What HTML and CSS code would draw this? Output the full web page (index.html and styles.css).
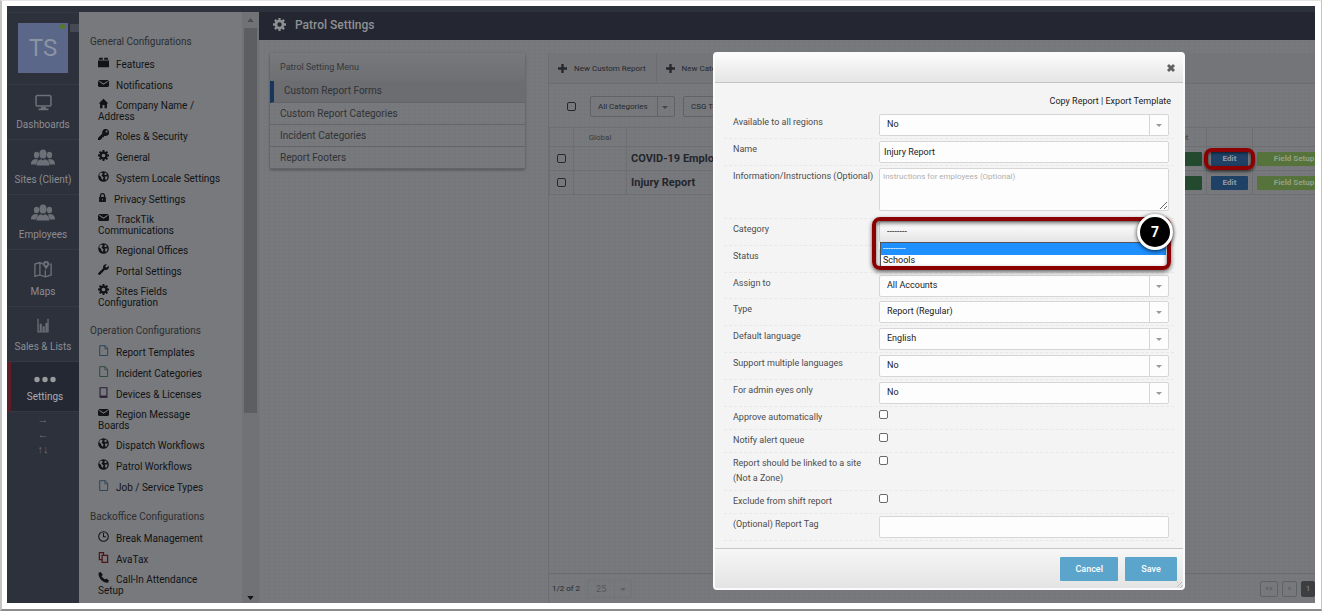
FILE: index.html
```html
<!DOCTYPE html>
<html lang="en">
<head>
<meta charset="utf-8">
<title>Patrol Settings</title>
<link rel="stylesheet" href="styles.css">
</head>
<body>
<svg class="defs" aria-hidden="true">
  <symbol id="i-box" viewBox="0 0 16 16"><path d="M2 1h5v3H1zM9 1h5l1 3H9zM0 5h16v10H0z"/></symbol>
  <symbol id="i-mail" viewBox="0 0 16 16"><path d="M2 3h12l2 2v7l-2 1H2l-2-1V5z"/><path d="M2 5l6 4 6-4" fill="none" stroke="#77797c" stroke-width="1.500"/></symbol>
  <symbol id="i-home" viewBox="0 0 16 16"><path d="M8 1l7 7h-2v7H9.500v-5h-3v5H3V8H1z"/></symbol>
  <symbol id="i-key" viewBox="0 0 16 16"><path d="M11 0a5 5 0 0 0-4.700 6.500L0 13v3h4v-2h2v-2h2l1.500-2.300A5 5 0 1 0 11 0zm1.500 2A1.500 1.500 0 1 1 11 3.500 1.500 1.500 0 0 1 12.500 2z" fill-rule="evenodd"/></symbol>
  <symbol id="i-gear" viewBox="0 0 16 16"><circle cx="8" cy="8" r="4.300" fill="none" stroke="currentColor" stroke-width="3.200"/><path d="M8 0v3M8 13v3M0 8h3M13 8h3M2.300 2.300l2.200 2.200M11.500 11.500l2.200 2.200M2.300 13.700l2.200-2.200M11.500 4.500l2.200-2.200" stroke="currentColor" stroke-width="2.800"/></symbol>
  <symbol id="i-globe" viewBox="0 0 16 16"><circle cx="8" cy="8" r="7.700"/><path d="M2 4l3-2 2 2-2 3 3 2-1 4-2-2-1-3-2-1zM10 2l3 2-1 2-3-1zM10 8h4l-1 4-2 1z" fill="#77797c"/></symbol>
  <symbol id="i-lock" viewBox="0 0 16 16"><path d="M2 7h12v9H2z"/><path d="M4.500 7V4.500a3.500 3.500 0 0 1 7 0V7" fill="none" stroke="currentColor" stroke-width="2.300"/><path d="M7.300 10h1.400v3H7.300z" fill="#77797c"/></symbol>
  <symbol id="i-wrench" viewBox="0 0 16 16"><path d="M15.500 2.500L13 5l-2-.3L10.700 3 13.200.5A4.500 4.500 0 0 0 7.500 6L.5 13a1.800 1.800 0 0 0 2.500 2.500l7-7a4.500 4.500 0 0 0 5.500-6z"/></symbol>
  <symbol id="i-file" viewBox="0 0 16 16"><path d="M2.500 1h8l3.500 4v10.300H2.500z" fill="none" stroke="currentColor" stroke-width="1.200"/><path d="M10 1v4.500h4" fill="none" stroke="currentColor"/></symbol>
  <symbol id="i-tablet" viewBox="0 0 16 16"><path d="M3 1h10v14H3z" fill="none" stroke="currentColor" stroke-width="1.600"/><path d="M3 12.500h10v2.500H3z"/></symbol>
  <symbol id="i-clock" viewBox="0 0 16 16"><circle cx="8" cy="8" r="7" fill="none" stroke="currentColor" stroke-width="1.500"/><path d="M8 3v5.500h3.500" fill="none" stroke="currentColor" stroke-width="1.500"/></symbol>
  <symbol id="i-copy" viewBox="0 0 16 16"><path d="M7 11H2V1h6v3M6 5h8v10H6z" fill="none" stroke="currentColor" stroke-width="1.800"/></symbol>
  <symbol id="i-phone" viewBox="0 0 16 16"><path d="M1 1l3-1 3 4-2 2.500 5 4.500 2-1.500 4 3-1.500 3C8 17-1 8 1 1z"/></symbol>
  <symbol id="i-monitor" viewBox="0 0 24 24"><rect x="1.500" y="2" width="21" height="15" rx="2" fill="none" stroke="currentColor" stroke-width="2.200"/><path d="M9 18h6l1 2.500h3V23H5v-2.500h3z"/></symbol>
  <symbol id="i-people" viewBox="0 0 24 16"><ellipse cx="5.500" cy="5.500" rx="2.600" ry="3.300"/><ellipse cx="18.500" cy="5.500" rx="2.600" ry="3.300"/><path d="M0 15c0-4 2-5 4.500-5.500L7 10l-2 5zM24 15c0-4-2-5-4.500-5.500L17 10l2 5z"/><ellipse cx="12" cy="4.500" rx="3.600" ry="4.500"/><path d="M5.500 16c0-4 2-5.500 4.800-6.200L12 11l1.700-1.200c2.800.7 4.800 2.200 4.800 6.200z"/></symbol>
  <symbol id="i-map" viewBox="0 0 24 22"><path d="M12 4L8 2 1.500 4v16L8 18l7 2.500 7.500-2.500V4h-2M8 2v16M15 12v8" fill="none" stroke="currentColor" stroke-width="1.700"/><path d="M16 0a4 4 0 0 1 4 4c0 3-3 4-4 8-1-4-4-5-4-8a4 4 0 0 1 4-4zm0 2.500a1.500 1.500 0 1 0 .01 0z" fill-rule="evenodd"/></symbol>
  <symbol id="i-chart" viewBox="0 0 16 18"><path d="M2 1v15.500h12V1" fill="none" stroke="currentColor" stroke-width="1.500"/><path d="M4 7h2.500v9H4zM7.500 10H10v6H7.500zM11 6h2.500v10H11z"/></symbol>
  <symbol id="i-dots" viewBox="0 0 22 6"><circle cx="3" cy="3" r="2.700"/><circle cx="11" cy="3" r="2.700"/><circle cx="19" cy="3" r="2.700"/></symbol>
  <symbol id="i-plus" viewBox="0 0 10 10"><path d="M3.700 0h2.600v3.700H10v2.600H6.300V10H3.700V6.300H0V3.700h3.700z"/></symbol>
  <symbol id="i-close" viewBox="0 0 10 10"><path d="M2.500 0L5 2.500 7.500 0 10 2.500 7.500 5 10 7.500 7.500 10 5 7.500 2.500 10 0 7.500 2.500 5 0 2.500z"/></symbol>
  <symbol id="i-up" viewBox="0 0 8 5"><path d="M0 5l4-5 4 5z"/></symbol>
  <symbol id="i-down" viewBox="0 0 8 5"><path d="M0 0h8L4 5z"/></symbol>
</svg>

<div class="app">
  <nav class="rail">
    <div class="profile"><span class="avatar">TS</span></div>
    <a class="rail-item" href="#"><svg class="rail-icon small"><use href="#i-monitor"/></svg>Dashboards</a>
    <a class="rail-item" href="#"><svg class="rail-icon"><use href="#i-people"/></svg>Sites (Client)</a>
    <a class="rail-item" href="#"><svg class="rail-icon"><use href="#i-people"/></svg>Employees</a>
    <a class="rail-item maps" href="#"><svg class="rail-icon"><use href="#i-map"/></svg>Maps</a>
    <a class="rail-item" href="#"><svg class="rail-icon chart"><use href="#i-chart"/></svg>Sales &amp; Lists</a>
    <a class="rail-item active" href="#"><svg class="rail-icon dots"><use href="#i-dots"/></svg>Settings</a>
    <div class="rail-arrows"><span>→</span><span>←</span><span>↑↓</span></div>
  </nav>

  <aside class="config">
    <div class="config-list">
      <h2 class="first">General Configurations</h2>
      <ul>
        <li><svg><use href="#i-box"/></svg>Features</li>
        <li><svg><use href="#i-mail"/></svg>Notifications</li>
        <li class="double"><svg><use href="#i-home"/></svg>Company Name /<br>Address</li>
        <li><svg><use href="#i-key"/></svg>Roles &amp; Security</li>
        <li><svg><use href="#i-gear"/></svg>General</li>
        <li><svg><use href="#i-globe"/></svg>System Locale Settings</li>
        <li><svg class="narrow"><use href="#i-lock"/></svg>Privacy Settings</li>
        <li class="double"><svg><use href="#i-mail"/></svg>TrackTik<br>Communications</li>
        <li><svg><use href="#i-globe"/></svg>Regional Offices</li>
        <li><svg><use href="#i-wrench"/></svg>Portal Settings</li>
        <li class="double"><svg><use href="#i-gear"/></svg>Sites Fields<br>Configuration</li>
      </ul>
      <h2>Operation Configurations</h2>
      <ul>
        <li><svg class="ink-blue"><use href="#i-file"/></svg>Report Templates</li>
        <li><svg class="ink-green"><use href="#i-file"/></svg>Incident Categories</li>
        <li><svg class="ink-purple"><use href="#i-tablet"/></svg>Devices &amp; Licenses</li>
        <li class="double"><svg><use href="#i-mail"/></svg>Region Message<br>Boards</li>
        <li><svg><use href="#i-globe"/></svg>Dispatch Workflows</li>
        <li><svg><use href="#i-globe"/></svg>Patrol Workflows</li>
        <li><svg class="ink-blue"><use href="#i-file"/></svg>Job / Service Types</li>
      </ul>
      <h2>Backoffice Configurations</h2>
      <ul>
        <li><svg><use href="#i-clock"/></svg>Break Management</li>
        <li><svg class="ink-red"><use href="#i-copy"/></svg>AvaTax</li>
        <li class="double"><svg><use href="#i-phone"/></svg>Call-In Attendance<br>Setup</li>
      </ul>
    </div>
    <div class="scrollbar">
      <svg class="scroll-arrow light"><use href="#i-up"/></svg>
      <div class="scroll-thumb"></div>
      <svg class="scroll-arrow"><use href="#i-down"/></svg>
    </div>
  </aside>

  <main class="main">
    <header class="titlebar"><svg><use href="#i-gear"/></svg><h1>Patrol Settings</h1></header>
    <div class="columns">
      <section class="menu">
        <h2>Patrol Setting Menu</h2>
        <a class="current" href="#">Custom Report Forms</a>
        <a href="#">Custom Report Categories</a>
        <a href="#">Incident Categories</a>
        <a href="#">Report Footers</a>
      </section>
      <section class="grid">
        <div class="toolbar">
          <button type="button"><svg><use href="#i-plus"/></svg>New Custom Report</button>
          <button type="button"><svg><use href="#i-plus"/></svg>New Category</button>
        </div>
        <div class="filters">
          <input type="checkbox" aria-label="Select all">
          <span class="filter"><select aria-label="Category filter"><option>All Categories</option></select></span>
          <span class="filter"><select aria-label="Template filter"><option>CSG Template</option></select></span>
        </div>
        <table class="reports">
          <colgroup><col class="c-check"><col class="c-global"><col><col class="c-account"><col class="c-edit"><col class="c-fields"></colgroup>
          <thead><tr><th></th><th>Global</th><th></th><th>Account</th><th></th><th></th></tr></thead>
          <tbody>
            <tr><td><input type="checkbox" aria-label="Select COVID-19 report"></td><td></td><td class="name">COVID-19 Employee Report</td><td><button class="tag green" type="button" aria-label="Account"></button></td><td><span class="marked"><button class="tag blue" type="button">Edit</button></span></td><td><button class="tag lime" type="button">Field Setup</button></td></tr>
            <tr><td><input type="checkbox" aria-label="Select Injury Report"></td><td></td><td class="name">Injury Report</td><td><button class="tag green" type="button" aria-label="Account"></button></td><td><button class="tag blue" type="button">Edit</button></td><td><button class="tag lime" type="button">Field Setup</button></td></tr>
          </tbody>
        </table>
        <footer class="pager">
          <span>1/2 of 2</span>
          <span class="size"><select aria-label="Rows per page"><option>25</option></select></span>
          <div class="pages"><button type="button">««</button><button type="button" class="slim">«</button><button type="button" class="on">1</button></div>
        </footer>
      </section>
    </div>
  </main>

  <form class="dialog" role="dialog" aria-label="Edit report">
    <header class="dialog-head"><button type="button" aria-label="Close"><svg><use href="#i-close"/></svg></button></header>
    <div class="dialog-body">
      <p class="links"><a href="#">Copy Report</a> | <a href="#">Export Template</a></p>
      <div class="row"><label for="regions">Available to all regions</label><span class="pick"><select id="regions"><option>No</option></select></span></div>
      <div class="row"><label for="name">Name</label><input type="text" id="name" value="Injury Report"></div>
      <div class="row tall"><label for="info">Information/Instructions (Optional)</label><textarea id="info" placeholder="Instructions for employees (Optional)"></textarea></div>
      <div class="row"><label for="category">Category</label>
        <span class="pick open"><select id="category"><option>--------</option></select>
          <ul class="options" role="listbox"><li class="hover" role="option">---------</li><li role="option">Schools</li></ul>
          <span class="callout"></span><span class="step">7</span>
        </span></div>
      <div class="row"><label for="status">Status</label><span class="pick"><select id="status"><option></option></select></span></div>
      <div class="row tight"><label for="assign">Assign to</label><span class="pick"><select id="assign"><option>All Accounts</option></select></span></div>
      <div class="row"><label for="type">Type</label><span class="pick"><select id="type"><option>Report (Regular)</option></select></span></div>
      <div class="row"><label for="lang">Default language</label><span class="pick"><select id="lang"><option>English</option></select></span></div>
      <div class="row"><label for="multi">Support multiple languages</label><span class="pick"><select id="multi"><option>No</option></select></span></div>
      <div class="row"><label for="admin">For admin eyes only</label><span class="pick"><select id="admin"><option>No</option></select></span></div>
      <div class="row check"><label for="approve">Approve automatically</label><input type="checkbox" id="approve"></div>
      <div class="row check"><label for="notify">Notify alert queue</label><input type="checkbox" id="notify"></div>
      <div class="row check"><label for="linked">Report should be linked to a site<br>(Not a Zone)</label><input type="checkbox" id="linked"></div>
      <div class="row check"><label for="exclude">Exclude from shift report</label><input type="checkbox" id="exclude"></div>
      <div class="row"><label for="tag">(Optional) Report Tag</label><input type="text" id="tag"></div>
    </div>
    <footer class="dialog-foot"><button type="button">Cancel</button><button type="submit">Save</button></footer>
  </form>
</div>
</body>
</html>
```
FILE: styles.css
```css
* { box-sizing: border-box; }
html { height: 100%; background: #fff; }
body {
  margin: 0; min-height: 100%; height: 100vh; padding: 5px 6px 6px 5px;
  border: 1px solid #c4c4c4; border-width: 1px 1px 2px 2px; border-top-color: #e4e4e4; border-bottom-color: #8c8c8c;
  font-family: Roboto, sans-serif; font-size: 9px; color: #26282d; overflow: hidden;
}
h1, h2, p, ul { margin: 0; padding: 0; font-weight: 400; }
ul { list-style: none; }
a { color: inherit; text-decoration: none; }
svg { fill: currentColor; }
button, input, select, textarea { font: inherit; color: inherit; margin: 0; }
.defs { position: absolute; width: 0; height: 0; }

.app {
  position: relative; display: flex; height: 100%; padding-top: 6px; overflow: hidden;
  background-color: #2d313c;
}

/* Left rail */
.rail { flex: 0 0 72px; border-top: 1px solid #343843; display: flex; flex-direction: column; color: #8b8d92; }
.profile { height: 72px; padding: 10px 11px; border-bottom: 1px solid #353944; }
.avatar {
  position: relative; display: flex; align-items: center; justify-content: center;
  width: 50px; height: 50px; background: #5a6789; color: #8c93a3; font-size: 24px;
}
.avatar::before { content: ""; position: absolute; left: 52px; top: 1px; width: 9px; height: 8px; background: #454953; }
.avatar::after {
  content: ""; position: absolute; top: 1px; right: 3px; width: 5px; height: 5px;
  border-radius: 50%; background: #557a26;
}
.rail-item {
  height: 55px; display: flex; flex-direction: column; align-items: center; justify-content: flex-end;
  gap: 8px; padding-bottom: 8px; border-bottom: 1px solid #353944; font-size: 10px; line-height: 12px;
}
.rail-item.maps { height: 57px; }
.rail-icon { width: 24px; height: 17px; color: #6d7077; }
.rail-icon.small { width: 17px; }
.rail-icon.chart { width: 14px; height: 15px; }
.rail-icon.dots { width: 22px; height: 7px; color: #999a9c; }
.rail-item.active { background: #242833; color: #aaacaf; border-left: 4px solid #5e1c24; height: 50px; }
.rail-arrows { display: flex; flex-direction: column; align-items: center; color: #6b6e75; font-size: 11px; line-height: 15px; }

/* Configuration list */
.config { flex: 0 0 180px; display: flex; background: #77797c; color: #121315; overflow: hidden; }
.config-list { flex: 1; padding: 19px 0 0 11px; font-size: 10px; line-height: 11px; }
.config-list h2 { font-size: 10px; padding: 13px 0 6px; color: #2c2e32; }
.config-list h2.first { padding: 5px 0 7px; }
.config-list ul { padding-left: 8px; }
.config-list li { padding: 5px 0; white-space: nowrap; }
.config-list li.double { padding: 4px 0; }
.config-list li svg { width: 11px; height: 11px; margin: -2px 7px 0 0; vertical-align: top; }
.config-list li svg.narrow { width: 9px; }
.ink-blue { color: #1f3a50; }
.ink-green { color: #23402c; }
.ink-purple { color: #2a1d36; }
.ink-red { color: #4e1518; }
.scrollbar { flex: 0 0 17px; background: #707276; display: flex; flex-direction: column; align-items: center; padding: 6px 2px 3px; }
.scroll-arrow { flex: none; width: 7px; height: 4px; margin-bottom: 6px; }
.scroll-arrow:last-child { margin: auto 0 0; }
.scroll-arrow.light { color: #4c4d50; }
.scroll-thumb { width: 13px; height: 385px; background: #5c5e62; }

/* Main area */
.main { flex: 1; min-width: 0; display: flex; flex-direction: column; background: #77797c; overflow: hidden; }
.titlebar { flex: 0 0 28px; background: #242731; color: #8f9094; display: flex; align-items: center; gap: 9px; padding: 0 14px 3px; }
.titlebar svg { width: 13px; height: 13px; }
.titlebar h1 { font-size: 12px; font-weight: 500; }
.columns {
  flex: 1; min-height: 0; display: flex; gap: 23px; padding: 13px 0 0 11px;
  background-image: repeating-linear-gradient(0deg, rgba(0,0,0,.02) 0 1px, transparent 1px 4px), repeating-linear-gradient(90deg, rgba(0,0,0,.02) 0 1px, transparent 1px 5px);
}
.menu { flex: 0 0 255px; align-self: flex-start; font-size: 10px; box-shadow: 0 1px 3px #4e5053; border-radius: 2px; }
.menu h2 { height: 28px; line-height: 28px; padding-left: 10px; font-size: 9px; color: #35373b; background: linear-gradient(#77797c, #6d6f73); }
.menu a { display: block; height: 22px; line-height: 22px; padding-left: 10px; border-bottom: 1px solid #626468; color: #303236; }
.menu a.current { line-height: 20px; border-left: 4px solid #16365c; background: #6b6d71; }
.grid { flex: 1; min-width: 0; display: flex; flex-direction: column; border-left: 1px solid #6c6e72; overflow: hidden; }
.toolbar { flex: 0 0 31px; display: flex; border-bottom: 1px solid #6b6d71; background: #737579; }
.toolbar button { display: flex; align-items: center; gap: 7px; padding: 0 10px 0 9px; border: 0; border-right: 1px solid #6b6d71; background: none; font-size: 8px; white-space: nowrap; }
.toolbar svg { width: 9px; height: 9px; }
.filters { flex: 0 0 43px; display: flex; align-items: center; gap: 8px; padding: 2px 0 0 18px; }
.filters input { margin-right: 6px; }
input[type="checkbox"] { appearance: none; width: 9px; height: 9px; border: 1px solid #26282c; border-radius: 2px; }
.filter { position: relative; width: 85px; }
.filter select { appearance: none; width: 100%; height: 21px; padding: 0 7px; border: 1px solid #606266; border-radius: 2px; background: linear-gradient(90deg, transparent 66px, #606266 66px 67px, transparent 67px); font-size: 8px; }
.filter::after, .pick::after { content: ""; position: absolute; right: 7px; top: 10px; border: 3px solid transparent; border-top-color: #44464a; border-bottom: 0; }
.reports { width: 100%; min-width: 780px; table-layout: fixed; border-collapse: collapse; }
.c-check { width: 24px; }
.c-global { width: 53px; }
.c-account { width: 66px; }
.c-edit { width: 46px; }
.c-fields { width: 76px; }
.reports th { height: 19px; padding: 0; font-size: 8px; font-weight: 400; color: #3a3c40; }
.reports td { height: 24px; padding: 0 4px; }
.reports th, .reports td { border: 1px solid #6c6e72; }
.reports td:first-child { padding-left: 7px; }
.reports td input { display: block; }
.reports .name { font-size: 11px; font-weight: 700; color: #23262c; white-space: nowrap; overflow: hidden; }
.tag { display: block; width: 100%; height: 14px; padding: 0; border: 0; border-radius: 1px; font-size: 8px; font-weight: 700; }
.tag.green { background: #234a2e; }
.tag.blue { background: #1f4166; color: #959ca5; }
.tag.lime { background: #55733a; color: #95a087; width: 74px; }
.marked { position: relative; display: block; }
.marked::after { content: ""; position: absolute; inset: -4px -7px; border: 4px solid #8b0000; border-radius: 8px; box-shadow: 0 2px 3px rgba(0,0,0,.5), inset 0 1px 3px rgba(0,0,0,.6); }
.pager { margin-top: auto; flex: 0 0 30px; display: flex; align-items: center; gap: 7px; padding-left: 3px; border-top: 1px solid #696b6f; font-size: 8px; }
.size { position: relative; width: 45px; }
.size::after { content: ""; position: absolute; right: 6px; top: 8px; border: 3px solid transparent; border-top-color: #5f6165; border-bottom: 0; }
.size select { appearance: none; width: 100%; height: 18px; border: 1px solid #717377; background: linear-gradient(90deg, transparent 26px, #717377 26px 27px, transparent 27px); color: #55575b; font-size: 9px; padding: 0 8px; }
.pages { margin-left: auto; display: flex; gap: 4px; }
.pages button { width: 18px; height: 16px; padding: 0; border: 1px solid #5f6165; border-radius: 2px; background: none; color: #55575b; font-size: 8px; }
.pages .slim { width: 15px; }
.pages .on { width: 14px; background: #3c3e42; color: #8c8d90; border-color: #3c3e42; }

/* Edit dialog */
.dialog {
  position: absolute; left: 706px; top: 46px; width: 472px; border: 2px solid #fbfbfb; border-radius: 4px;
  background: #f4f4f4; color: #4b4c4e; overflow: hidden;
}
.dialog-head { height: 29px; display: flex; align-items: center; justify-content: flex-end; padding: 0 8px 0 0; border-bottom: 1px solid #c4c4c4; background: linear-gradient(#fbfbfb, #e5e5e5); }
.dialog-head button { display: flex; padding: 0; border: 0; background: none; color: #606060; }
.dialog-head svg { width: 8px; height: 8px; }
.dialog-body { padding: 12px 9px 7px; }
.links { padding-right: 3px; text-align: right; line-height: 13px; margin-bottom: 4px; color: #1b1b1b; }
.row { display: grid; grid-template-columns: 146px 1fr; padding: 2px 5px 2px 9px; border-bottom: 1px dashed #e8e8e8; align-items: start; }
.row.tall { padding-bottom: 7px; }
.row.tight { padding-bottom: 1px; }
.row.check { padding: 2px 5px 4px 9px; }
.row label { line-height: 15px; padding-top: 1px; white-space: nowrap; }
.row input[type="text"], .row textarea, .pick select {
  display: block; width: 100%; height: 22px; padding: 0 4px; border: 1px solid #d6d6d6; border-radius: 2px;
  background: #fdfdfd; color: #222;
}
.row textarea { height: 43px; padding: 3px; resize: vertical; }
.row textarea::placeholder { color: #b0b0b0; font-size: 8px; }
.row input[type="checkbox"] { margin-top: 1px; border-color: #6a6a6a; background: #fff; }
.pick { position: relative; display: block; }
.pick select { appearance: none; padding: 0 7px 2px; background: linear-gradient(#d6d6d6, #d6d6d6) right 18px top / 1px 100% no-repeat #fdfdfd; }
.pick::after { border-top-color: #9a9a9a; }
.pick.open select { background: linear-gradient(#fff, #e4e4e4); }
.options { position: absolute; z-index: 1; left: 1px; right: 3px; top: 21px; border: 1px solid #555; border-width: 1px 0 0 1px; background: #fff; color: #111; font-size: 9px; line-height: 11px; }
.options li { padding: 0 2px; }
.options .hover { height: 12px; background: #1e90ff; color: #fff; }
.callout { position: absolute; z-index: 2; left: -7px; right: -2px; top: -4px; height: 53px; border: 4px solid #8b0000; border-radius: 8px; box-shadow: 0 2px 4px rgba(0,0,0,.6), inset 0 2px 4px rgba(0,0,0,.6); }
.step {
  position: absolute; z-index: 3; right: -4px; top: -7px; width: 36px; height: 36px; border: 3px solid #fff; border-radius: 50%;
  background: #000; color: #fff; font-size: 14px; font-weight: 700; line-height: 30px; text-align: center; box-shadow: 0 1px 4px rgba(0,0,0,.8);
}
.dialog-foot {
  display: flex; justify-content: flex-end; gap: 7px; padding: 8px 6px 7px; border-top: 1px solid #c8c8c8;
  background: repeating-linear-gradient(135deg, #bbb 0 1px, transparent 1px 3px) right bottom / 6px 6px no-repeat, linear-gradient(#f6f6f6, #e4e4e4);
}
.dialog-foot button { height: 24px; min-width: 52px; padding: 0 15px; border: 0; border-radius: 1px; background: #5ba4cb; color: #fff; font-weight: 500; }
```
